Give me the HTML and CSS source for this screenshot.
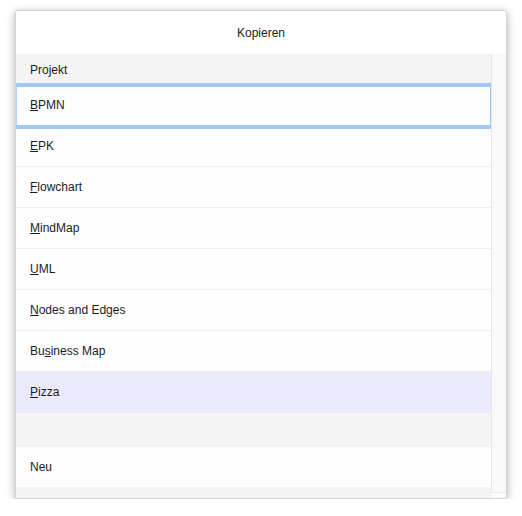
FILE: index.html
```html
<!DOCTYPE html>
<html lang="de">
<head>
<meta charset="utf-8">
<title>Kopieren</title>
<link rel="stylesheet" href="styles.css">
</head>
<body>
<div class="dialog">
  <div class="title">Kopieren</div>
  <div class="body">
    <div class="list">
      <div class="header">Projekt</div>
      <div class="row focused"><span class="mn">B</span>PMN</div>
      <div class="row"><span class="mn">E</span>PK</div>
      <div class="row"><span class="mn">F</span>lowchart</div>
      <div class="row"><span class="mn">M</span>indMap</div>
      <div class="row"><span class="mn">U</span>ML</div>
      <div class="row"><span class="mn">N</span>odes and Edges</div>
      <div class="row">Bu<span class="mn">s</span>iness Map</div>
      <div class="row selected"><span class="mn">P</span>izza</div>
      <div class="spacer"></div>
      <div class="row last">Neu</div>
      <div class="filler"></div>
    </div>
    <div class="scrollcol">
      <div class="track"></div>
    </div>
  </div>
</div>
</body>
</html>
```
FILE: styles.css
```css
html, body {
  margin: 0;
  padding: 0;
  background: #ffffff;
}

body {
  font-family: "Liberation Sans", Arial, sans-serif;
  font-size: 12px;
  color: #1c1c1c;
}

.dialog {
  margin: 10px 0 0 15px;
  width: 490px;
  height: 487px;
  border: 1px solid #d4d4d4;
  border-radius: 3px;
  background: #ffffff;
  box-shadow: 0 2px 8px rgba(0, 0, 0, 0.32);
  display: flex;
  flex-direction: column;
  overflow: hidden;
}

.title {
  height: 43px;
  flex: none;
  display: flex;
  align-items: center;
  justify-content: center;
  padding-top: 0;
  box-sizing: border-box;
  background: #ffffff;
}

.body {
  flex: 1;
  display: flex;
  min-height: 0;
}

.list {
  flex: 1;
  display: flex;
  flex-direction: column;
  overflow: hidden;
  background: #f4f4f4;
}

.header {
  height: 31px;
  flex: none;
  display: flex;
  align-items: center;
  padding-left: 14px;
  background: #f4f4f4;
}

.row {
  height: 40px;
  flex: none;
  display: flex;
  align-items: center;
  padding-left: 14px;
  background: #fdfdfd;
  border-bottom: 1px solid #efefef;
  position: relative;
}

.row.focused {
  z-index: 1;
  border-bottom-color: #9fc8f5;
  box-shadow:
    0 -2px 0 #9fc8f5,
    0 3px 0 #9fc8f5,
    inset 0 2px 0 #9fc8f5,
    inset 1px 0 0 #b3d4f7,
    inset -1px 0 0 #9fc8f5;
}

.row.selected {
  background: #eaeafc;
  border-bottom-color: #eaeafc;
}

.row.last {
  border-bottom: none;
}

.spacer {
  height: 34px;
  flex: none;
  background: #f4f4f4;
}

.filler {
  flex: 1;
  background: #f4f4f4;
}

.mn {
  text-decoration: underline;
  text-underline-offset: 1px;
}

.scrollcol {
  width: 15px;
  flex: none;
  display: flex;
  flex-direction: column;
  background: #fbfbfb;
}

.track {
  height: 439px;
  background: #f9f9f9;
  border-left: 1px solid #e6e6e6;
  border-bottom: 1px solid #e9e9e9;
  box-sizing: border-box;
}
```
